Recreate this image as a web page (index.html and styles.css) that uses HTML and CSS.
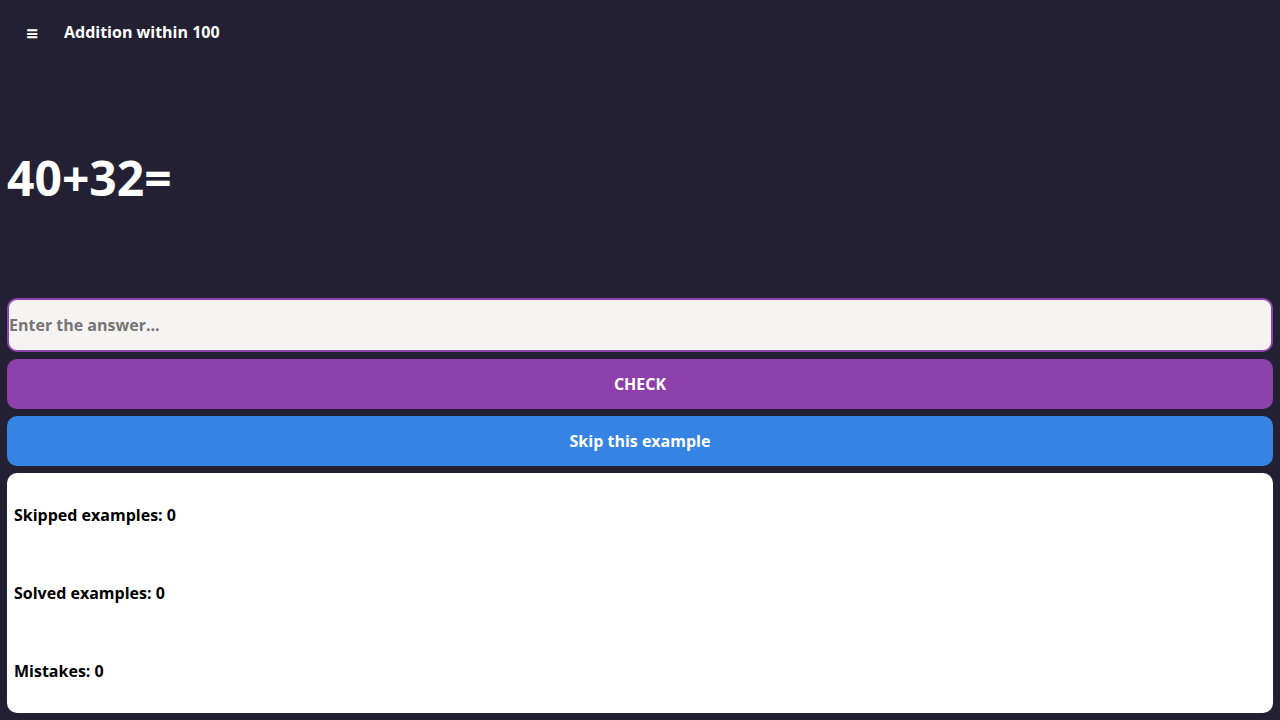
FILE: index.html
```html
<!DOCTYPE html>
<html lang="en">
<head>
<meta charset="utf-8">
<title>Addition within 100</title>
<link rel="stylesheet" href="styles.css">
</head>
<body>
<div class="app">
  <header class="topbar">
    <button class="menu-btn" type="button">≡</button>
    <h1 class="title">Addition within 100</h1>
  </header>
  <main class="main">
    <div class="task">
      <h2 class="equation">40+32=</h2>
    </div>
    <input class="answer" type="text" placeholder="Enter the answer...">
    <button class="btn btn-check" type="button">CHECK</button>
    <button class="btn btn-skip" type="button">Skip this example</button>
    <section class="stats">
      <div class="stat">Skipped examples: 0</div>
      <div class="stat">Solved examples: 0</div>
      <div class="stat">Mistakes: 0</div>
    </section>
  </main>
</div>
</body>
</html>
```
FILE: styles.css
```css
* { box-sizing: border-box; }
html, body { margin: 0; padding: 0; }
body {
  background: #242033;
  font-family: "Open Sans", "Noto Sans", sans-serif;
  color: #fff;
  height: 720px;
  overflow: hidden;
}
.app {
  display: flex;
  flex-direction: column;
  height: 720px;
}
.topbar {
  display: flex;
  align-items: center;
  height: 64px;
  padding-left: 16px;
  gap: 16px;
}
.menu-btn {
  width: 32px;
  height: 32px;
  background: transparent;
  border: none;
  color: #fff;
  font-family: "DejaVu Sans", sans-serif;
  font-size: 16px;
  font-weight: bold;
  padding: 0;
  margin-top: 2px;
}
.title {
  margin: 0;
  font-size: 16px;
  font-weight: 700;
}
.main {
  flex: 1;
  display: flex;
  flex-direction: column;
  gap: 7px;
  padding: 0 7px 7px;
}
.task {
  height: 227px;
  display: flex;
  align-items: center;
}
.equation {
  margin: 0;
  font-size: 48px;
  font-weight: 700;
}
.answer {
  height: 54px;
  width: 100%;
  border: 2px solid #8e44ad;
  border-radius: 10px;
  background: #f5f4f2;
  font-family: inherit;
  font-size: 16px;
  font-weight: 700;
  padding: 0;
  color: #222;
  outline: none;
}
.answer::placeholder { color: #757575; }
.btn {
  height: 50px;
  border: none;
  border-radius: 10px;
  color: #fff;
  font-family: inherit;
  font-size: 16px;
  font-weight: 700;
}
.btn-check { background: #8e40aa; }
.btn-skip { background: #3584e4; }
.stats {
  flex: 1;
  background: #fff;
  border-radius: 10px;
  color: #000;
  padding: 3px 7px;
  display: flex;
  flex-direction: column;
}
.stat {
  height: 78px;
  display: flex;
  align-items: center;
  font-size: 16px;
  font-weight: 700;
}
```
